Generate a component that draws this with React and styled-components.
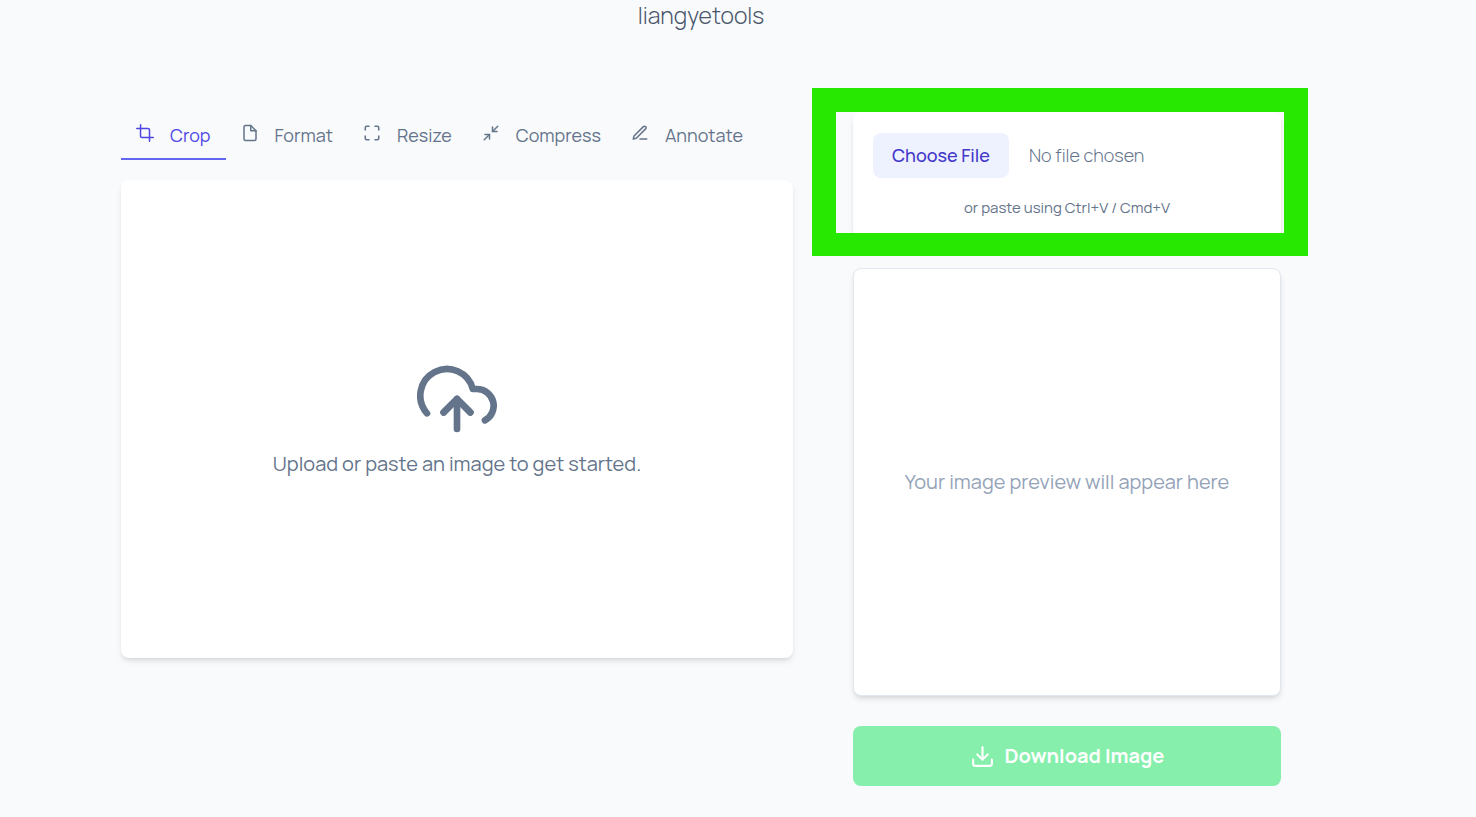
import React, { useState } from "react";
import styled, { createGlobalStyle } from "styled-components";
import {
  FiCrop,
  FiFile,
  FiMaximize,
  FiMinimize2,
  FiEdit3,
  FiUploadCloud,
  FiDownload,
} from "react-icons/fi";

const GlobalStyle = createGlobalStyle`
  *, *::before, *::after { box-sizing: border-box; }
  body {
    margin: 0;
    background: #f9fafc;
    color: #64748b;
    font-family: Manrope, Inter, "Liberation Sans", sans-serif;
    font-weight: 400;
  }
  button, input { font: inherit; }
`;

const Page = styled.div`
  padding: 0 195px 31px 121px;
`;

const Title = styled.h1`
  margin: 0 0 82px;
  color: #475569;
  font-size: 23px;
  font-weight: 300;
  line-height: 30px;
  text-align: center;
`;

const Workspace = styled.main`
  display: grid;
  grid-template-columns: minmax(0, 1fr) 428px;
  gap: 60px;
  align-items: start;
`;

const Editor = styled.section`
  display: flex;
  flex-direction: column;
  gap: 20px;
`;

const Tabs = styled.nav`
  display: flex;
`;

const Tab = styled.button`
  display: flex;
  align-items: baseline;
  gap: 16px;
  height: 48px;
  padding: 11px 15px;
  border: 0;
  border-bottom: 2px solid ${(p) => (p.$active ? "#6366f1" : "transparent")};
  background: none;
  color: ${(p) => (p.$active ? "#4f46e5" : "#64748b")};
  font-size: 18px;
  font-weight: 400;
  line-height: 24px;
  white-space: nowrap;
  cursor: pointer;

  svg {
    flex: none;
    width: 18px;
    height: 18px;
    margin-bottom: 2px;
  }
`;

const Card = styled.div`
  border-radius: 8px;
  background: #fff;
  box-shadow: 0 4px 6px -1px rgba(0, 0, 0, 0.1), 0 2px 4px -2px rgba(0, 0, 0, 0.1);
`;

const DropZone = styled(Card)`
  display: flex;
  flex-direction: column;
  align-items: center;
  justify-content: center;
  gap: 10px;
  min-height: 478px;
  font-size: 20px;
  line-height: 30px;

  svg {
    width: 80px;
    height: 80px;
  }
`;

const Message = styled.p`
  margin: 0;
`;

const Sidebar = styled.aside`
  display: flex;
  flex-direction: column;
  gap: 30px;
`;

const Highlight = styled.div`
  position: relative;

  &::after {
    content: "";
    position: absolute;
    inset: -24px -27px -18px -41px;
    border: 24px solid #27e800;
    border-bottom-width: 23px;
    pointer-events: none;
  }
`;

const UploadCard = styled(Card)`
  display: flex;
  flex-direction: column;
  gap: 20px;
  padding: 21px 20px 20px;
`;

const FileInput = styled.input`
  width: 100%;
  height: 45px;
  color: #64748b;
  font-size: 18px;
  font-weight: 300;
  line-height: 24px;

  &::file-selector-button {
    height: 45px;
    margin: 0 20px 0 0;
    padding: 0 19px 2px;
    border: 0;
    border-radius: 8px;
    background: #eef2ff;
    color: #4338ca;
    font-family: inherit;
    font-size: 18px;
    font-weight: 500;
    line-height: 24px;
    cursor: pointer;
  }
`;

const Hint = styled.label`
  font-size: 15px;
  line-height: 20px;
  text-align: center;
`;

const Preview = styled(Card)`
  display: flex;
  align-items: center;
  justify-content: center;
  aspect-ratio: 1;
  border: 1px solid #e2e8f0;
  color: #94a3b8;
  font-size: 20px;
  line-height: 30px;
`;

const DownloadButton = styled.button`
  display: flex;
  align-items: center;
  justify-content: center;
  gap: 10px;
  height: 60px;
  border: 0;
  border-radius: 8px;
  background: #86efac;
  color: #fff;
  font-size: 20px;
  font-weight: 700;
  line-height: 30px;

  svg {
    width: 25px;
    height: 25px;
  }
`;

const tools = [
  { name: "Crop", Icon: FiCrop },
  { name: "Format", Icon: FiFile },
  { name: "Resize", Icon: FiMaximize },
  { name: "Compress", Icon: FiMinimize2 },
  { name: "Annotate", Icon: FiEdit3 },
];

export default function App() {
  const [active, setActive] = useState("Crop");

  return (
    <Page>
      <GlobalStyle />
      <Title>liangyetools</Title>
      <Workspace>
        <Editor>
          <Tabs>
            {tools.map(({ name, Icon }) => (
              <Tab
                key={name}
                type="button"
                $active={active === name}
                onClick={() => setActive(name)}
              >
                <Icon />
                {name}
              </Tab>
            ))}
          </Tabs>
          <DropZone>
            <FiUploadCloud />
            <Message>Upload or paste an image to get started.</Message>
          </DropZone>
        </Editor>
        <Sidebar>
          <Highlight>
            <UploadCard>
              <FileInput id="image-file" type="file" accept="image/*" />
              <Hint htmlFor="image-file">or paste using Ctrl+V / Cmd+V</Hint>
            </UploadCard>
          </Highlight>
          <Preview>
            <Message>Your image preview will appear here</Message>
          </Preview>
          <DownloadButton type="button" disabled>
            <FiDownload />
            Download Image
          </DownloadButton>
        </Sidebar>
      </Workspace>
    </Page>
  );
}
